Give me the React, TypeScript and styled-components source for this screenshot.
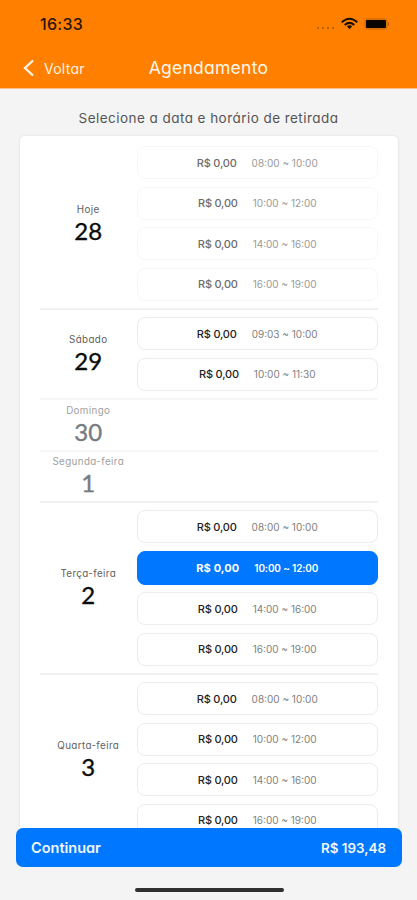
import React from "react";
import styled, { createGlobalStyle, css } from "styled-components";

const GlobalStyle = createGlobalStyle`
  * { box-sizing: border-box; }
  body {
    margin: 0;
    background: #f4f4f4;
    font-family: Inter, "Open Sans", sans-serif;
    font-feature-settings: "cv11" 1;
    overflow: hidden;
  }
`;

const Screen = styled.div`
  width: 417px;
  height: 900px;
  display: flex;
  flex-direction: column;
  overflow: hidden;
  background: #f4f4f4;
`;

const Header = styled.header`
  height: 89px;
  flex: none;
  background: #ff8000;
  border-bottom: 1px solid #f9c28c;
`;

const StatusBar = styled.div`
  height: 48px;
  padding: 0 27px 0 40px;
  display: flex;
  align-items: center;
  justify-content: space-between;
`;

const Clock = styled.span`
  font-size: 16px;
  line-height: 20px;
  font-weight: 500;
  letter-spacing: 0.3px;
  color: #2a1600;
`;

const StatusIcons = styled.svg`
  width: 76px;
  height: 16px;
  display: block;
`;

const NavBar = styled.div`
  height: 40px;
  display: grid;
  grid-template-columns: 117px 183px 117px;
  align-items: center;
`;

const BackButton = styled.button`
  display: flex;
  align-items: center;
  gap: 9px;
  padding: 0 0 0 23px;
  border: 0;
  background: none;
  color: #fff2e2;
  font: 400 14px/20px Inter, sans-serif;
  font-feature-settings: "cv11" 1;
  letter-spacing: 0.25px;
`;

const BackText = styled.span`
  padding-top: 2px;
`;

const Title = styled.h1`
  margin: 0;
  text-align: center;
  font-size: 17.5px;
  line-height: 24px;
  font-weight: 400;
  letter-spacing: 0.25px;
  color: #fff6ea;
`;

const Instruction = styled.p`
  margin: 0;
  height: 47px;
  flex: none;
  padding-top: 19px;
  text-align: center;
  font-size: 13.5px;
  line-height: 20px;
  letter-spacing: 0.45px;
  color: #555;
`;

const Card = styled.main`
  width: 378px;
  margin-left: 20px;
  flex: none;
  height: 692px;
  overflow: hidden;
  padding: 3px 20px 0;
  background: #fff;
  border-radius: 5px 5px 0 0;
  box-shadow: 0 0 3px rgba(0, 0, 0, 0.1);
`;

const DaySection = styled.section<{ $height: number; $faint?: boolean }>`
  height: ${(p) => p.$height}px;
  display: grid;
  grid-template-columns: 96.5px 241.5px;
  align-items: center;
  border-bottom: 2px solid ${(p) => (p.$faint ? "#f6f6f6" : "#f0f0f0")};
`;

const DayLabel = styled.div<{ $muted?: boolean }>`
  display: flex;
  flex-direction: column;
  align-items: center;
  color: ${(p) => (p.$muted ? "#777b7f" : "#0c0c0c")};
`;

const Weekday = styled.span<{ $muted?: boolean }>`
  font-size: 9.8px;
  line-height: 14px;
  letter-spacing: 0.38px;
  color: ${(p) => (p.$muted ? "#a0a0a0" : "#606060")};
`;

const DayNumber = styled.span`
  font: 400 24px/28px Lato, sans-serif;
  -webkit-text-stroke: 0.35px currentColor;
`;

const SlotList = styled.div`
  display: flex;
  flex-direction: column;
  gap: 7.5px;
`;

const Slot = styled.button<{ $state: SlotState }>`
  height: 33px;
  width: 241.5px;
  padding: 0;
  display: flex;
  align-items: center;
  justify-content: center;
  gap: 15px;
  border: 1.5px solid #ececec;
  border-radius: 8px;
  background: #fff;
  color: #222;
  font: 400 10px/16px Inter, sans-serif;
  ${(p) =>
    p.$state === "disabled" &&
    css`
      border-color: #f7f7f7;
      color: #6c6c6c;
    `}
  ${(p) =>
    p.$state === "selected" &&
    css`
      height: 34px;
      border-color: #0077ff;
      background: #0077ff;
      color: #fff;
    `}
`;

const Price = styled.span<{ $state: SlotState }>`
  font-size: 11px;
  font-weight: ${(p) => (p.$state === "selected" ? 700 : 500)};
  letter-spacing: ${(p) => (p.$state === "selected" ? 0.1 : -0.2)}px;
`;

const Hours = styled.span<{ $state: SlotState }>`
  font-weight: ${(p) => (p.$state === "selected" ? 600 : 400)};
  letter-spacing: ${(p) => (p.$state === "selected" ? -0.15 : 0)}px;
  color: ${(p) => (p.$state === "selected" ? "#fff" : p.$state === "disabled" ? "#999" : "#808080")};
`;

const ContinueButton = styled.button`
  width: 386px;
  height: 39px;
  flex: none;
  margin-left: 16px;
  padding: 0 16px 0 15px;
  display: flex;
  align-items: center;
  justify-content: space-between;
  border: 0;
  border-radius: 7px;
  background: #0077ff;
  color: #f2f8ff;
  font: 600 14.5px/20px Inter, sans-serif;
  font-feature-settings: "cv11" 1;
`;

const Total = styled.span`
  font-size: 13.4px;
`;

const HomeIndicator = styled.div`
  width: 149px;
  height: 4px;
  margin: 21px 0 0 134.5px;
  border-radius: 2px;
  background: #303030;
`;

type SlotState = "disabled" | "available" | "selected";
type Day = {
  name: string;
  date: number;
  height: number;
  muted?: boolean;
  faintDivider?: boolean;
  slots: { hours: string; state: SlotState }[];
};

const makeSlots = (hours: string[], state: SlotState = "available", selected = -1) =>
  hours.map((h, i) => ({ hours: h, state: i === selected ? ("selected" as const) : state }));

const fullDay = ["08:00 ~ 10:00", "10:00 ~ 12:00", "14:00 ~ 16:00", "16:00 ~ 19:00"];

const days: Day[] = [
  { name: "Hoje", date: 28, height: 171, slots: makeSlots(fullDay, "disabled") },
  { name: "Sábado", date: 29, height: 90, faintDivider: true, slots: makeSlots(["09:03 ~ 10:00", "10:00 ~ 11:30"]) },
  { name: "Domingo", date: 30, height: 51.5, muted: true, faintDivider: true, slots: [] },
  { name: "Segunda-feira", date: 1, height: 51.5, muted: true, slots: [] },
  { name: "Terça-feira", date: 2, height: 172, slots: makeSlots(fullDay, "available", 1) },
  { name: "Quarta-feira", date: 3, height: 171, slots: makeSlots(fullDay) },
];

export default function App() {
  return (
    <Screen>
      <GlobalStyle />
      <Header>
        <StatusBar>
          <Clock>16:33</Clock>
          <StatusIcons viewBox="0 0 76 16" fill="none">
            <g fill="#a95908">
              <circle cx="4" cy="12" r="1" />
              <circle cx="9" cy="12" r="1" />
              <circle cx="14" cy="12" r="1" />
              <circle cx="19" cy="12" r="1" />
            </g>
            <g stroke="#1c0e00" strokeWidth="2">
              <path d="M27.7 6.2Q35.5 -0.8 43.3 6.2" />
              <path d="M30.7 9Q35.5 4.8 40.3 9" />
            </g>
            <path d="M32.8 10.3Q35.5 8.2 38.2 10.3L35.5 13.2Z" fill="#1c0e00" />
            <rect x="51" y="3" width="22" height="10" rx="2.5" stroke="#a95908" strokeWidth=".8" />
            <rect x="52" y="4" width="20" height="8" rx="1" fill="#0a0500" />
            <path d="M74 6Q76.5 8 74 10Z" fill="#a95908" />
          </StatusIcons>
        </StatusBar>
        <NavBar>
          <BackButton>
            <svg width="12" height="18" viewBox="0 0 12 18" fill="none">
              <path d="M10 1.5L2 9L10 16.5" stroke="#fff6ea" strokeWidth="2.3" />
            </svg>
            <BackText>Voltar</BackText>
          </BackButton>
          <Title>Agendamento</Title>
        </NavBar>
      </Header>
      <Instruction>Selecione a data e horário de retirada</Instruction>
      <Card>
        {days.map((day) => (
          <DaySection key={day.date} $height={day.height} $faint={day.faintDivider}>
            <DayLabel $muted={day.muted}>
              <Weekday $muted={day.muted}>{day.name}</Weekday>
              <DayNumber>{day.date}</DayNumber>
            </DayLabel>
            <SlotList>
              {day.slots.map((slot) => (
                <Slot key={slot.hours} $state={slot.state}>
                  <Price $state={slot.state}>R$ 0,00</Price>
                  <Hours $state={slot.state}>{slot.hours}</Hours>
                </Slot>
              ))}
            </SlotList>
          </DaySection>
        ))}
      </Card>
      <ContinueButton>
        <span>Continuar</span>
        <Total>R$ 193,48</Total>
      </ContinueButton>
      <HomeIndicator />
    </Screen>
  );
}
